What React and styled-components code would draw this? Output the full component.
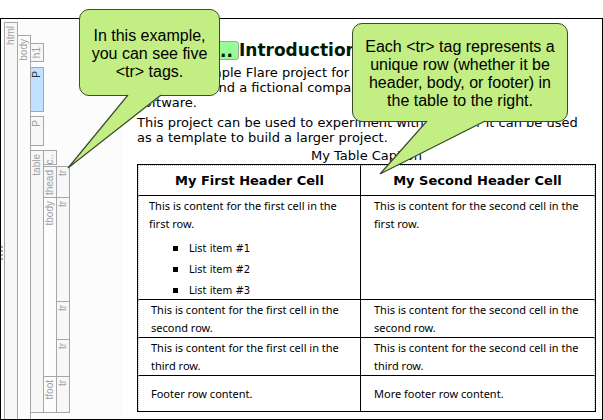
import React from "react";
import styled, { createGlobalStyle } from "styled-components";

const GlobalStyle = createGlobalStyle`
  * { box-sizing: border-box; }
  body { margin: 0; background: #fff; color: #000; font-family: "DejaVu Sans", Verdana, sans-serif; }
`;

const Page = styled.div`
  position: relative;
  padding-top: 18px;
  overflow: hidden;
`;

const Editor = styled.main`
  display: flex;
  border: 1px solid #000;
`;

const Gutter = styled.nav`
  flex: none;
  display: flex;
  align-items: stretch;
  width: 122px;
  background: #fcfcfc;
`;

const Grip = styled.div`
  flex: none;
  align-self: center;
  display: grid;
  gap: 2px;
  width: 3px;
  padding-top: 68px;
`;

const GripDot = styled.i`
  width: 2px;
  height: 2px;
  background: #aaa;
`;

const Structure = styled.div`
  display: flex;
  padding-top: 3px;
`;

const Node = styled.div`
  display: flex;
  height: ${(p) => (p.$height ? p.$height + "px" : "auto")};
  margin-bottom: ${(p) => p.$after || 0}px;
`;

const Bar = styled.div`
  flex: none;
  display: flex;
  flex-direction: column;
  align-items: center;
  width: 14px;
  padding-top: 3px;
  border: 1px solid #a6a6a6;
  border-bottom-width: ${(p) => (p.$open ? 0 : 1)}px;
  background: ${(p) => (p.$selected ? "#c2e0ff" : p.$plain ? "#fcfcfc" : "#f7f7f7")};
  color: ${(p) => (p.$selected ? "#223344" : "#a0a0a0")};
  font: 10px/12px "Liberation Sans", Arial, sans-serif;
`;

const BarLabel = styled.span`
  flex: none;
  writing-mode: vertical-rl;
  transform: rotate(180deg);
  white-space: nowrap;
`;

const Children = styled.div`
  display: flex;
  flex-direction: column;
  margin-left: -1px;
  padding-top: ${(p) => p.$top || 0}px;
`;

const Topic = styled.article`
  flex: 1;
  min-width: 0;
  padding: 20px 6px 7px 14px;
`;

const Title = styled.h1`
  display: flex;
  align-items: center;
  height: 22px;
  margin: 0 0 4px;
  padding-left: 60px;
  color: #001a00;
  font-size: 17px;
  line-height: 22px;
`;

const Chip = styled.span`
  height: 19px;
  width: 42px;
  padding-right: 5px;
  border: 1px solid #9aa89a;
  border-radius: 3px;
  background: #98fb98;
  line-height: 18px;
  text-align: right;
`;

const Paragraph = styled.p`
  margin: 0;
  font-size: 13px;
  line-height: 15px;
  white-space: nowrap;
  & + & { margin-top: 5px; }
`;

const Line = styled.span`
  display: block;
`;

const Misspelled = styled.span`
  text-decoration: underline dotted #e00000;
  text-underline-offset: 2px;
`;

const Table = styled.table`
  width: 100%;
  border: 1px solid #000;
  border-collapse: separate;
  border-spacing: 0;
  table-layout: fixed;
  font: 11px/18px "Noto Sans", Verdana, sans-serif;
`;

const Caption = styled.caption`
  padding-top: 3px;
  font: 13px/16px "DejaVu Sans", Verdana, sans-serif;
`;

const Row = styled.tr`
  height: ${(p) => p.$height}px;
`;

const HeaderCell = styled.th`
  padding: 0;
  border-bottom: 1px solid #000;
  border-top: 1px dotted #bbb;
  font: bold 13px/18px "DejaVu Sans", Verdana, sans-serif;
  &:first-child { width: 223px; border-left: 1px dotted #bbb; border-right: 1px solid #000; }
  &:last-child { border-right: 1px dotted #bbb; }
`;

const Cell = styled.td`
  padding: ${(p) => (p.$top ? 1 : 0)}px 0 0 13px;
  border-bottom: ${(p) => (p.$last ? 0 : 1)}px solid #000;
  vertical-align: ${(p) => (p.$top ? "top" : "middle")};
  white-space: nowrap;
  &:first-child { padding-left: ${(p) => (p.$top ? 10 : 12)}px; border-left: 1px dotted #bbb; border-right: 1px solid #000; }
  &:last-child { border-right: 1px dotted #bbb; }
`;

const List = styled.ul`
  margin: 5px 0 -2px;
  padding: 0 0 0 24px;
  list-style: none;
  font: 10px/21px "DejaVu Sans", Verdana, sans-serif;
`;

const Item = styled.li`
  display: flex;
  align-items: center;
  gap: 11px;
  &::before { content: ""; width: 5px; height: 5px; background: #000; }
`;

const Callout = styled.aside`
  position: absolute;
  display: flex;
  align-items: center;
  justify-content: center;
  left: ${(p) => p.$x}px;
  top: ${(p) => p.$y}px;
  width: ${(p) => p.$w}px;
  height: ${(p) => p.$h}px;
  padding-top: 2px;
  border: 1px solid #3d4a2c;
  border-radius: 10px;
  background: #c2ee84;
  font: 16px/18px "Liberation Sans", Arial, sans-serif;
  text-align: center;
  white-space: nowrap;
`;

const Tail = styled.svg`
  position: absolute;
  left: ${(p) => p.$x}px;
  top: 100%;
  overflow: visible;
`;

function TreeNode({ label, height, after, top, open, selected, plain, children }) {
  return (
    <Node $height={height} $after={after}>
      <Bar $open={open} $selected={selected} $plain={plain}>
        <BarLabel>{label}</BarLabel>
      </Bar>
      {children && <Children $top={top}>{children}</Children>}
    </Node>
  );
}

function TagTree() {
  return (
    <Structure>
      <TreeNode label="html" top={13} open>
        <TreeNode label="body" height={384} top={8} open plain>
          <TreeNode label="h1" height={19} after={5} />
          <TreeNode label="P" height={45} after={4} selected />
          <TreeNode label="P" height={30} after={4} />
          <TreeNode label="table" height={263}>
            <TreeNode label="c.." height={15} after={1} />
            <TreeNode label="thead" height={32} after={-1}>
              <TreeNode label="tr" height={32} />
            </TreeNode>
            <TreeNode label="tbody" height={180} after={-1} plain>
              <TreeNode label="tr" height={105} after={-1} />
              <TreeNode label="tr" height={39} after={-1} />
              <TreeNode label="tr" height={38} />
            </TreeNode>
            <TreeNode label="tfoot" height={37} plain>
              <TreeNode label="tr" height={37} />
            </TreeNode>
          </TreeNode>
        </TreeNode>
      </TreeNode>
    </Structure>
  );
}

function Bubble({ x, y, w, h, tailX, tailW, tip, lines }) {
  return (
    <Callout $x={x} $y={y} $w={w} $h={h}>
      <div>{lines.map((line) => <Line key={line}>{line}</Line>)}</div>
      <Tail $x={tailX} width={tailW} height="1" aria-hidden="true">
        <path d={`M0 -1 H${tailW} V1 L${tip} L0 1 Z`} fill="#c2ee84" />
        <path d={`M0 0 L${tip} L${tailW} 0`} fill="none" stroke="#3d4a2c" strokeWidth="1.2" />
      </Tail>
    </Callout>
  );
}

const bodyRows = ["second", "third"];

export default function App() {
  return (
    <>
      <GlobalStyle />
      <Page>
        <Editor>
          <Gutter aria-label="Document structure">
            <Grip><GripDot /><GripDot /><GripDot /><GripDot /></Grip>
            <TagTree />
          </Gutter>
          <Topic>
            <Title><Chip>...</Chip>Introduction</Title>
            <Paragraph>
              <Line>This is a sample Flare project for users</Line>
              <Line>of <Misspelled>MadCap</Misspelled> and a fictional company</Line>
              <Line>software.</Line>
            </Paragraph>
            <Paragraph>
              <Line>This project can be used to experiment with Flare, or it can be used</Line>
              <Line>as a template to build a larger project.</Line>
            </Paragraph>
            <Table>
              <Caption>My Table Caption</Caption>
              <thead>
                <Row $height={31}>
                  <HeaderCell scope="col">My First Header Cell</HeaderCell>
                  <HeaderCell scope="col">My Second Header Cell</HeaderCell>
                </Row>
              </thead>
              <tbody>
                <Row $height={104}>
                  <Cell $top>
                    This is content for the first cell in the<br />first row.
                    <List>
                      <Item>List item #1</Item>
                      <Item>List item #2</Item>
                      <Item>List item #3</Item>
                    </List>
                  </Cell>
                  <Cell $top>This is content for the second cell in the<br />first row.</Cell>
                </Row>
                {bodyRows.map((name) => (
                  <Row key={name} $height={38}>
                    <Cell>This is content for the first cell in the<br />{name} row.</Cell>
                    <Cell>This is content for the second cell in the<br />{name} row.</Cell>
                  </Row>
                ))}
              </tbody>
              <tfoot>
                <Row $height={35}>
                  <Cell $last>Footer row content.</Cell>
                  <Cell $last>More footer row content.</Cell>
                </Row>
              </tfoot>
            </Table>
          </Topic>
        </Editor>
        <Bubble x={79} y={9} w={141} h={87} tailX={48} tailW={33} tip="-60 73"
          lines={["In this example,", "you can see five", "<tr> tags."]} />
        <Bubble x={352} y={23} w={216} h={99} tailX={74} tailW={58} tip="-47 53"
          lines={["Each <tr> tag represents a", "unique row (whether it be", "header, body, or footer) in", "the table to the right."]} />
      </Page>
    </>
  );
}
